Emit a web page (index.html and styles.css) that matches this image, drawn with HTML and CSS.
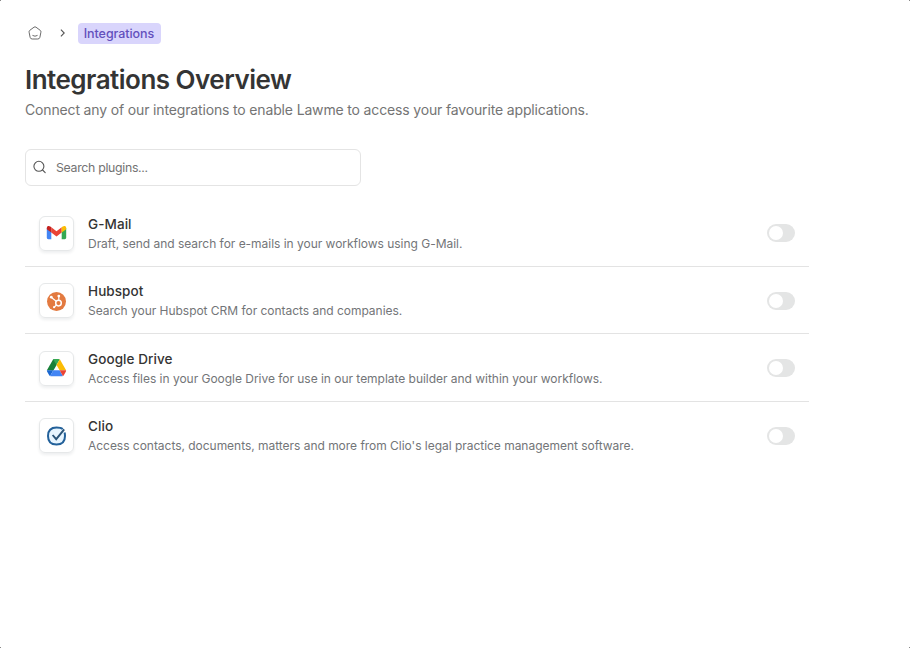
FILE: index.html
```html
<!DOCTYPE html>
<html lang="en">
<head>
<meta charset="utf-8">
<title>Integrations Overview</title>
<link rel="stylesheet" href="styles.css">
</head>
<body>
<main class="page">
  <nav class="breadcrumb">
    <svg class="home" viewBox="0 0 14 14" fill="none" stroke="#6c6c6c" stroke-width="1"><path d="M6 1.2 1.8 4.3Q.8 5 1.1 6.2L2.1 11.3Q2.5 13 4.2 13H9.8Q11.5 13 11.9 11.3L12.9 6.2Q13.2 5 12.2 4.3L8 1.2Q7 .5 6 1.2Z"/><path d="M4.8 9.6Q7 11 9.2 9.6" stroke-linecap="round"/></svg>
    <svg class="chevron" viewBox="0 0 6 8" fill="none" stroke="#555" stroke-width="1.1"><path d="m.9.7 3.3 3.3L.9 7.3"/></svg>
    <span class="current">Integrations</span>
  </nav>
  <h1>Integrations Overview</h1>
  <p class="intro">Connect any of our integrations to enable Lawme to access your favourite applications.</p>
  <div class="search">
    <svg viewBox="0 0 14 14" fill="none" stroke="#555" stroke-width="1.1" stroke-linecap="round"><circle cx="5.9" cy="6.3" r="5"/><path d="m9.6 10 2.6 2.6"/></svg>
    <span>Search plugins...</span>
  </div>
  <ul class="list">
    <li class="row">
      <div class="tile"><svg viewBox="0 0 21 20"><path fill="#4285f4" d="M.8 5v9.8q0 1.4 1.4 1.4h3.1V8.3z"/><path fill="#34a853" d="M15.7 8.3v7.9h3.1q1.4 0 1.4-1.4V5z"/><path fill="#ea4335" d="m5.3 4.3 5.2 3.9 5.2-3.9v5.3l-5.2 3.9-5.2-3.9z"/><path fill="#c5221f" d="M.8 5.1c0-2.3 2.1-2.6 3.5-1.6l1 .8v5.3L.8 6.3z"/><path fill="#fbbc04" d="M20.2 5.1c0-2.3-2.1-2.6-3.5-1.6l-1 .8v5.3l4.5-3.3z"/></svg></div>
      <div class="text"><h2>G-Mail</h2><p>Draft, send and search for e-mails in your workflows using G-Mail.</p></div>
      <span class="toggle"></span>
    </li>
    <li class="row">
      <div class="tile"><svg viewBox="-.5 -.5 21 20"><circle cx="10" cy="10" r="9.5" fill="#e37a40"/><g fill="none" stroke="#fff"><circle cx="12" cy="11.6" r="2.8" stroke-width="1.5"/><path d="M12.3 8.8V4.7M9.8 9.8 4.6 5.7M9.9 13.5l-2 2" stroke-width="1.2"/></g><g fill="#fff"><circle cx="12.3" cy="4.6" r="1.4"/><circle cx="4.8" cy="5.7" r="1.4"/><circle cx="7.6" cy="15.7" r="1.1"/></g></svg></div>
      <div class="text"><h2>Hubspot</h2><p>Search your Hubspot CRM for contacts and companies.</p></div>
      <span class="toggle"></span>
    </li>
    <li class="row">
      <div class="tile"><svg viewBox="-.5 0 21 20"><path fill="#188038" d="M6.7 1.3H10l.1 5.8-3.2 5.5L.4 12.3z"/><path fill="#34a853" d="M6.7 1.3Q7.2.9 8 .9h4q.8 0 1.3.4L10 7.1z"/><path fill="#fbbc04" d="m10 7.1 3.3-5.8 6.3 11h-6.5z"/><path fill="#1967d2" d="M.4 12.3h6.5l-3.3 5.8Q3 17.8 2.7 17.2L.7 13.7q-.3-.5-.3-1.4z"/><path fill="#4285f4" d="M6.9 12.3h6.2l3.3 5.8q-.4.2-.9.2h-11q-.5 0-.9-.2z"/><path fill="#ea4335" d="M13.1 12.3h6.5q0 .8-.3 1.4l-2 3.5q-.3.6-.9.9z"/></svg></div>
      <div class="text"><h2>Google Drive</h2><p>Access files in your Google Drive for use in our template builder and within your workflows.</p></div>
      <span class="toggle"></span>
    </li>
    <li class="row">
      <div class="tile"><svg viewBox="-.5 0 21 20"><path d="M16.2 3.1Q14.6 1.5 10 1.5 1.5 1.5 1.5 10t8.5 8.5 8.5-8.5q0-1.8-.4-3.5" fill="#e7f5ff" stroke="#23619a" stroke-width="2"/><path d="m6.1 9 3.6 4.2 8-9.8" fill="none" stroke="#2a5478" stroke-width="1.9"/></svg></div>
      <div class="text"><h2>Clio</h2><p>Access contacts, documents, matters and more from Clio's legal practice management software.</p></div>
      <span class="toggle"></span>
    </li>
  </ul>
</main>
</body>
</html>
```

FILE: styles.css
```css
* { box-sizing: border-box; }
html { background: #fff; }
body {
  margin: 0; height: 648px; font-family: Inter, "Liberation Sans", sans-serif; color: #343434; white-space: nowrap;
  /* window corner pixels */
  background:
    linear-gradient(#888, #888) 0 0 / 1px 1px no-repeat,
    linear-gradient(#888, #888) 100% 0 / 1px 1px no-repeat,
    linear-gradient(#888, #888) 0 100% / 1px 1px no-repeat,
    linear-gradient(#888, #888) 100% 100% / 1px 1px no-repeat;
}
h1, h2, p, ul { margin: 0; padding: 0; }
svg { display: block; flex: none; }
.page { width: 809px; padding: 22px 0 0 25px; }
.breadcrumb { display: flex; align-items: center; height: 22px; padding-left: 3px; }
.home { width: 14px; height: 14px; }
.chevron { width: 6px; height: 8px; margin: 0 12px 0 17.5px; }
.current { width: 83px; height: 21px; line-height: 21px; border-radius: 4px; background: #d9d5fc; color: #6350bd; font-size: 12.5px; font-weight: 500; letter-spacing: -.06px; text-align: center; }
h1 { margin-top: 18px; height: 36px; line-height: 36px; font-size: 26px; font-weight: 600; letter-spacing: -.51px; }
.intro { height: 24px; line-height: 24px; font-size: 14px; letter-spacing: -.153px; color: #747474; }
.search { display: flex; align-items: center; width: 336px; height: 37px; margin-top: 26.5px; padding-left: 7px; border: 1px solid #e4e4e4; border-radius: 6px; font-size: 12.3px; letter-spacing: -.3px; color: #737373; }
.search svg { width: 14px; height: 14px; margin-right: 9px; }
.list { list-style: none; margin-top: 13.5px; }
.row { display: flex; align-items: center; height: 67.5px; padding: 1.5px 14px 0; border-bottom: 1px solid #e3e3e3; }
.row:last-child { border-bottom-color: transparent; }
.tile { display: flex; align-items: center; justify-content: center; width: 35px; height: 35px; margin-right: 14px; border: 1px solid #e6e8e9; border-radius: 6px; box-shadow: 0 2px 3px rgba(40, 50, 60, .08); }
.tile svg { width: 21px; height: 20px; }
.text { flex: 1; padding-top: 1.5px; }
h2 { height: 19px; line-height: 19px; font-size: 13.5px; font-weight: 500; letter-spacing: .08px; }
.text p { height: 19px; line-height: 19px; font-size: 12px; letter-spacing: -.028px; color: #737578; }
.toggle { width: 28px; height: 18px; padding: 2px; border-radius: 9px; background: #e4e5e5; }
.toggle::before { content: ""; display: block; width: 14px; height: 14px; border-radius: 50%; background: #fff; }
```
